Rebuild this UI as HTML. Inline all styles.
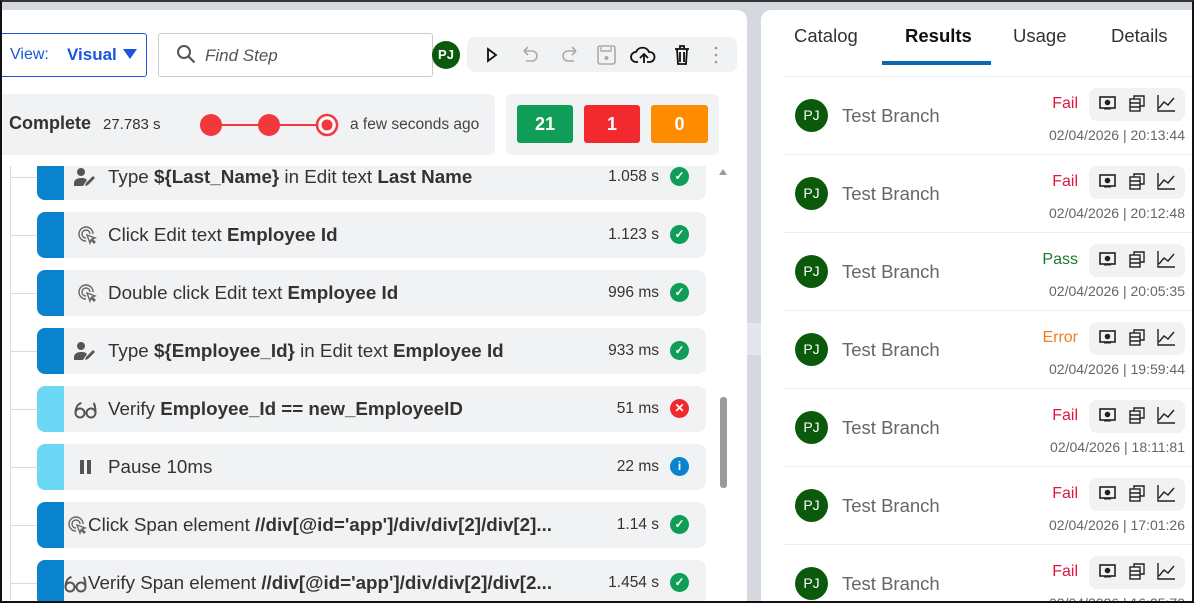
<!DOCTYPE html><html><head><style>
*{box-sizing:border-box;margin:0;padding:0}
html,body{width:1194px;height:603px;overflow:hidden}
body{background:#d5d9df;font-family:"Liberation Sans",sans-serif;position:relative}
.abs{position:absolute}
.frame{position:absolute;left:0;top:0;width:1194px;height:603px;border:2px solid #111;pointer-events:none;z-index:10}
.lp{left:0;top:10px;width:747px;height:593px;background:#fff;border-top-right-radius:10px}
.rp{left:761px;top:10px;width:433px;height:593px;background:#fff;border-top-left-radius:10px}
.row{position:absolute;left:37px;width:669px;height:46px;background:#f1f2f4;border-radius:8px;overflow:hidden}
.row .bar{position:absolute;left:0;top:0;width:27px;height:100%;background:#0a83cf}
.row .bar.l{background:#6dd8f5}
.row .t{position:absolute;left:71px;top:0;line-height:46px;font-size:18.8px;color:#333;white-space:nowrap}
.row svg.ic{position:absolute;left:37px;top:13px}
.row .tm{position:absolute;right:47px;top:0;line-height:46px;font-size:15.5px;color:#333}
.st{position:absolute;left:633px;top:13px;width:19px;height:19px;border-radius:50%;background:#0f9d58;color:#fff;font-size:12px;font-weight:bold;text-align:center;line-height:19px}
.conn{position:absolute;left:10px;width:27px;height:1px;background:#d6dbe2}
.res{position:absolute;left:783px;width:411px;height:78px;border-top:1px solid #eceef1}
.av{position:absolute;left:12px;width:33px;height:33px;border-radius:50%;background:#0b5a0b;color:#fff;font-size:14px;text-align:center;line-height:33px}
.nm{position:absolute;left:59px;font-size:18.5px;color:#666}
.ss{position:absolute;right:116px;font-size:16px}
.ib{position:absolute;left:306px;width:96px;height:33px;background:#f1f2f4;border-radius:8px}
.dt{position:absolute;right:9px;font-size:14px;color:#666}
</style></head><body>
<svg width="0" height="0" style="position:absolute">
<defs>
<g id="person"><circle cx="7" cy="5" r="4" fill="#555"/><path d="M0 19v-3c0-3 3-5 7-5s5 1 6 2l-4 6z" fill="#555"/><path d="M11 19l1-3 7-7 2 2-7 7z" fill="#555"/></g>
<g id="click" fill="none" stroke="#666" stroke-width="1.4"><path d="M9 16a7 7 0 117-7"/><path d="M9 13a4 4 0 114-4"/><path d="M10 10l8 3-3 1 3 3-1 1-3-3-1 3z" fill="#fff"/></g>
<g id="glass" fill="none" stroke="#555" stroke-width="2"><circle cx="6" cy="14" r="4.5"/><circle cx="17" cy="14" r="4.5"/><path d="M10.5 14h2M1.5 14c0-5 2-9 6-10M21.5 14c0-5-1-9-2-10"/></g>
</defs></svg>
<div class="abs lp"></div>
<div class="abs" style="left:747px;top:323px;width:14px;height:32px;background:#e3e6ea"></div>
<div class="abs rp"></div>
<div class="abs" style="left:-4px;top:33px;width:151px;height:44px;border:1.5px solid #1a56db;border-radius:3px;background:#fff"></div>
<div class="abs" style="left:10px;top:46px;font-size:16px;color:#1a56db">View:</div>
<div class="abs" style="left:67px;top:45px;font-size:17px;color:#1a56db;font-weight:bold">Visual</div>
<svg class="abs" style="left:122px;top:48px" width="16" height="12"><path d="M1 1h14L8 11z" fill="#1a56db"/></svg>
<div class="abs" style="left:158px;top:33px;width:275px;height:44px;border:1px solid #c9ccd1;border-radius:3px;background:#fff"></div>
<svg class="abs" style="left:176px;top:44px" width="20" height="20"><circle cx="8" cy="8" r="6" fill="none" stroke="#555" stroke-width="2"/><path d="M12.5 12.5l6 6" stroke="#555" stroke-width="2.2"/></svg>
<div class="abs" style="left:205px;top:46px;font-size:17px;color:#555;font-style:italic">Find Step</div>
<div class="abs" style="left:432px;top:41px;width:28px;height:28px;border-radius:50%;background:#0b5a0b;color:#fff;font-size:13px;font-weight:bold;text-align:center;line-height:28px">PJ</div>
<div class="abs" style="left:467px;top:37px;width:270px;height:35px;background:#f1f2f4;border-radius:8px"></div>
<svg class="abs" style="left:480px;top:44px" width="250" height="22">
<path d="M8 5l8 6-8 6z" fill="none" stroke="#111" stroke-width="1.8"/>
<path d="M44 7h8a5 5 0 010 10h-6M44 7l4-4M44 7l4 4" fill="none" stroke="#aaa" stroke-width="1.6"/>
<path d="M96 7h-8a5 5 0 000 10h6M96 7l-4-4M96 7l-4 4" fill="none" stroke="#aaa" stroke-width="1.6"/>
<rect x="118" y="2" width="17" height="18" rx="2" fill="none" stroke="#aaa" stroke-width="1.6"/><circle cx="126.5" cy="14" r="2" fill="#aaa"/><path d="M121 3v4h10V3" stroke="#aaa" fill="none" stroke-width="1.4"/>
<path d="M158 18h-2a5 5 0 010-10 7 7 0 0113 0 4.5 4.5 0 011 10h-3M164 19v-8M160 14l4-4 4 4" fill="none" stroke="#111" stroke-width="1.8"/>
<path d="M195 5h14M200 5V2h4v3M197 5l1 15h8l1-15M200 8v10M204 8v10" fill="none" stroke="#111" stroke-width="1.8"/>
<circle cx="236" cy="4" r="1.3" fill="#999"/><circle cx="236" cy="11" r="1.3" fill="#999"/><circle cx="236" cy="18" r="1.3" fill="#999"/>
</svg>
<div class="abs" style="left:0;top:94px;width:495px;height:61px;background:#f1f2f4;border-radius:0 6px 6px 0"></div>
<div class="abs" style="left:9px;top:113px;font-size:18px;font-weight:bold;color:#333">Complete</div>
<div class="abs" style="left:103px;top:116px;font-size:15px;color:#333">27.783 s</div>
<svg class="abs" style="left:198px;top:112px" width="142" height="26"><path d="M13 13h116" stroke="#f2383c" stroke-width="2"/><circle cx="13" cy="13" r="11" fill="#f2383c"/><circle cx="71" cy="13" r="11" fill="#f2383c"/><circle cx="129" cy="13" r="10" fill="#fff" stroke="#f2383c" stroke-width="2.5"/><circle cx="129" cy="13" r="5.5" fill="#f2383c"/></svg>
<div class="abs" style="left:350px;top:116px;font-size:15.5px;color:#444">a few seconds ago</div>
<div class="abs" style="left:506px;top:94px;width:213px;height:61px;background:#f1f2f4;border-radius:6px"></div>
<div class="abs" style="left:517px;top:105px;width:56px;height:38px;background:#0f9d58;border-radius:3px;color:#fff;font-weight:bold;font-size:18px;text-align:center;line-height:38px">21</div>
<div class="abs" style="left:584px;top:105px;width:56px;height:38px;background:#f2292e;border-radius:3px;color:#fff;font-weight:bold;font-size:18px;text-align:center;line-height:38px">1</div>
<div class="abs" style="left:651px;top:105px;width:57px;height:38px;background:#ff8c00;border-radius:3px;color:#fff;font-weight:bold;font-size:18px;text-align:center;line-height:38px">0</div>
<div class="abs" style="left:0;top:166px;width:747px;height:437px;overflow:hidden">
<div style="position:absolute;left:10px;top:0;width:1px;height:440px;background:#d6dbe2"></div>
<div class="conn" style="top:11px"></div><div class="conn" style="top:69px"></div><div class="conn" style="top:127px"></div><div class="conn" style="top:185px"></div><div class="conn" style="top:243px"></div><div class="conn" style="top:301px"></div><div class="conn" style="top:359px"></div><div class="conn" style="top:417px"></div>
<div class="row" style="top:-12px"><div class="bar"></div><svg class="ic" width="24" height="22"><use href="#person"/></svg><div class="t">Type <b>${Last_Name}</b> in Edit text <b>Last Name</b></div><div class="tm">1.058 s</div><div class="st">✓</div></div>
<div class="row" style="top:46px"><div class="bar"></div><svg class="ic" style="left:40px" width="24" height="22"><use href="#click"/></svg><div class="t">Click Edit text <b>Employee Id</b></div><div class="tm">1.123 s</div><div class="st">✓</div></div>
<div class="row" style="top:104px"><div class="bar"></div><svg class="ic" style="left:40px" width="24" height="22"><use href="#click"/></svg><div class="t">Double click Edit text <b>Employee Id</b></div><div class="tm">996 ms</div><div class="st">✓</div></div>
<div class="row" style="top:162px"><div class="bar"></div><svg class="ic" width="24" height="22"><use href="#person"/></svg><div class="t">Type <b>${Employee_Id}</b> in Edit text <b>Employee Id</b></div><div class="tm">933 ms</div><div class="st">✓</div></div>
<div class="row" style="top:220px"><div class="bar l"></div><svg class="ic" width="24" height="22"><use href="#glass"/></svg><div class="t">Verify <b>Employee_Id == new_EmployeeID</b></div><div class="tm">51 ms</div><div class="st" style="background:#f2292e">✕</div></div>
<div class="row" style="top:278px"><div class="bar l"></div><svg class="ic" style="left:42px;top:16px" width="14" height="14"><rect x="1" y="0" width="4" height="14" fill="#555"/><rect x="8" y="0" width="4" height="14" fill="#555"/></svg><div class="t">Pause 10ms</div><div class="tm">22 ms</div><div class="st" style="background:#0a83cf">i</div></div>
<div class="row" style="top:336px"><div class="bar"></div><svg class="ic" style="left:30px" width="24" height="22"><use href="#click"/></svg><div class="t" style="left:51px">Click Span element <b>//div[@id='app']/div/div[2]/div[2]...</b></div><div class="tm">1.14 s</div><div class="st">✓</div></div>
<div class="row" style="top:394px"><div class="bar"></div><svg class="ic" style="left:27px" width="24" height="22"><use href="#glass"/></svg><div class="t" style="left:51px">Verify Span element <b>//div[@id='app']/div/div[2]/div[2...</b></div><div class="tm">1.454 s</div><div class="st">✓</div></div>
</div>
<svg class="abs" style="left:718px;top:168px" width="10" height="8"><path d="M1 7L5 1 9 7z" fill="#999"/></svg>
<div class="abs" style="left:720px;top:397px;width:7px;height:91px;background:#9a9a9a;border-radius:3px"></div>
<div class="abs" style="left:794px;top:25px;font-size:18.5px;color:#333">Catalog</div>
<div class="abs" style="left:905px;top:25px;font-size:18.5px;color:#111;font-weight:bold">Results</div>
<div class="abs" style="left:1013px;top:25px;font-size:18.5px;color:#333">Usage</div>
<div class="abs" style="left:1111px;top:25px;font-size:18.5px;color:#333">Details</div>
<div class="abs" style="left:882px;top:61px;width:109px;height:4px;background:#0a67b0"></div>
<div id="R"></div>
<script>
var d=[["Fail","#e0173c","20:13:44"],["Fail","#e0173c","20:12:48"],["Pass","#1b7a2a","20:05:35"],["Error","#f07f22","19:59:44"],["Fail","#e0173c","18:11:81"],["Fail","#e0173c","17:01:26"],["Fail","#e0173c","16:25:70"]];
var h="";d.forEach(function(r,i){var y=76+78*i;
h+='<div class="res" style="top:'+y+'px"><div class="av" style="top:22px">PJ</div><div class="nm" style="top:28px">Test Branch</div><div class="ss" style="top:18px;color:'+r[1]+'">'+r[0]+'</div><div class="ib" style="top:11px"><svg width="96" height="33"><rect x="11" y="9" width="15" height="11" fill="none" stroke="#222" stroke-width="1.6"/><circle cx="18.5" cy="14.5" r="2.8" fill="#222"/><path d="M15 21h7" stroke="#222"/><rect x="41" y="11" width="10" height="12" fill="none" stroke="#222" stroke-width="1.4"/><path d="M41 15h10M41 19h10M45 11V8h10v10h-4" fill="none" stroke="#222" stroke-width="1.4"/><path d="M69 7v16h17M70 20l5-6 4 3 6-7" fill="none" stroke="#222" stroke-width="1.4"/></svg></div><div class="dt" style="top:50px">02/04/2026 | '+r[2]+'</div></div>';});
document.getElementById("R").innerHTML=h;
</script>
<div class="frame" style="border-top:2px solid #333"></div>
</body></html>
